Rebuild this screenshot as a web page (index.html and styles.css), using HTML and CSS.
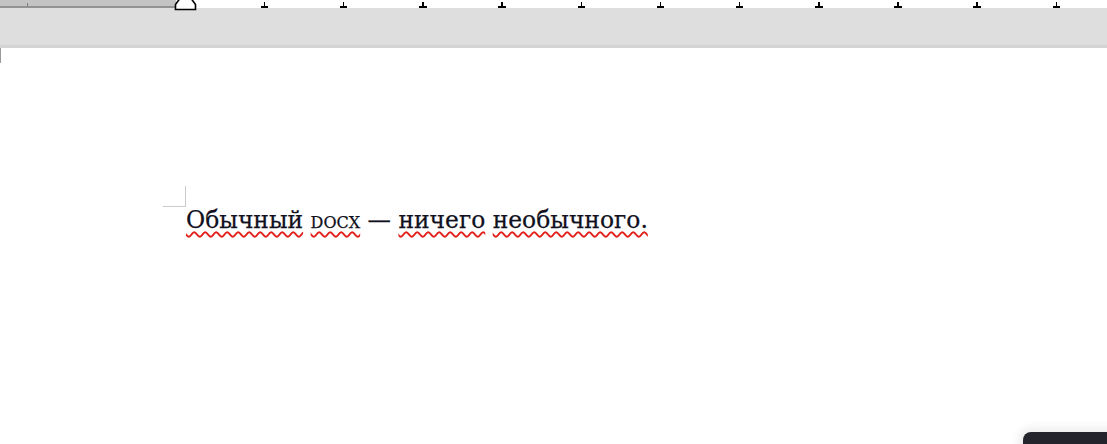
FILE: index.html
```html
<!DOCTYPE html>
<html lang="ru">
<head>
<meta charset="utf-8">
<title>DOCX</title>
<link rel="stylesheet" href="styles.css">
</head>
<body>
<div class="app">
  <div class="ruler">
    <div class="ruler-margin"><span class="margin-tick"></span></div>
    <div class="ruler-body">
      <span class="tick"></span><span class="tick"></span><span class="tick"></span><span class="tick"></span>
      <span class="tick"></span><span class="tick"></span><span class="tick"></span><span class="tick"></span>
      <span class="tick"></span><span class="tick"></span><span class="tick"></span>
    </div>
    <svg class="indent-marker" width="23" height="11" viewBox="0 0 23 11">
      <path d="M1.5 9.5 V4.5 L5.5 -1 H17.5 L21.5 4.5 V9.5 Z" fill="#fff" stroke="#000" stroke-width="1.6"/>
    </svg>
  </div>
  <div class="band"></div>
  <div class="page">
    <span class="page-edge"></span>
    <p class="para"><span class="err">Обычный</span> <span class="err sc">docx</span> — <span class="err">ничего</span> <span class="err">необычного.</span></p>
  </div>
  <div class="float-panel"></div>
</div>
</body>
</html>
```

FILE: styles.css
```css
html, body {
  margin: 0;
  padding: 0;
  background: #fff;
  overflow: hidden;
}
.app {
  position: relative;
  width: 1107px;
  height: 444px;
  overflow: hidden;
  font-family: "DejaVu Serif", "Liberation Serif", serif;
}
.ruler {
  position: relative;
  display: flex;
  height: 8px;
  background: #fff;
}
.ruler-margin {
  position: relative;
  width: 176px;
  height: 6px;
  background: #c3c3c3;
  border-bottom: 2px solid #929292;
}
.margin-tick {
  position: absolute;
  left: 27px;
  top: 3px;
  width: 1px;
  height: 3px;
  background: #7c7c7c;
}
.ruler-body {
  display: flex;
  align-items: flex-end;
  gap: 72.2px;
  padding-left: 84.8px;
  height: 8px;
}
.tick {
  position: relative;
  width: 7px;
  height: 6px;
  flex: none;
}
.tick::before {
  content: "";
  position: absolute;
  left: 3px;
  top: 0;
  width: 1.5px;
  height: 6px;
  background: #000;
}
.tick::after {
  content: "";
  position: absolute;
  left: 0;
  bottom: 0;
  width: 7.5px;
  height: 2px;
  background: #000;
}
.indent-marker {
  position: absolute;
  left: 174px;
  top: 0;
}
.band {
  height: 37px;
  background: #dedede;
  border-bottom: 3px solid #d4d4d4;
}
.page {
  position: relative;
  height: 396px;
  background: #fff;
  padding-top: 157px;
  box-sizing: border-box;
}
.page-edge {
  position: absolute;
  left: 0;
  top: 0;
  width: 1px;
  height: 15px;
  background: #9a9a9a;
}
.para {
  position: relative;
  margin: 0 0 0 186px;
  font-size: 23.4px;
  line-height: 30px;
  color: #101020;
  white-space: nowrap;
  -webkit-text-stroke: 0.25px #101020;
}
.para::before {
  content: "";
  position: absolute;
  left: -23px;
  top: -19px;
  width: 22px;
  height: 20px;
  border-right: 1.5px solid #cacaca;
  border-bottom: 1.5px solid #cacaca;
}
.err {
  text-decoration: underline wavy #e3201a;
  text-decoration-thickness: 1.5px;
  text-underline-offset: 3px;
  text-decoration-skip-ink: none;
}
.sc {
  font-variant: small-caps;
}
.float-panel {
  position: absolute;
  left: 1023px;
  top: 432px;
  width: 120px;
  height: 40px;
  background: #23242c;
  border-radius: 8px;
  box-shadow: 0 0 10px 4px rgba(0, 0, 0, 0.08);
}
```
